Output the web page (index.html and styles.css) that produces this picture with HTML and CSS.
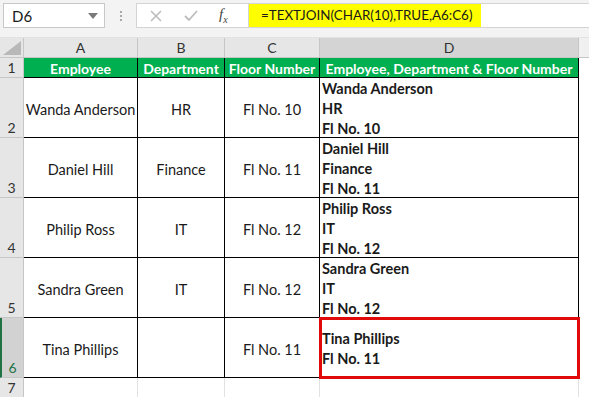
FILE: index.html
```html
<!DOCTYPE html>
<html>
<head>
  <title>TEXTJOIN example</title>
  <link rel="stylesheet" href="styles.css">
</head>
<body>

<!-- Name box and formula bar -->
<div class="toolbar">
  <div class="namebox">
    <span>D6</span>
    <svg class="caret" width="10" height="6" viewBox="0 0 10 6"><path d="M0 0 H10 L5 6 Z" fill="#7a7a7a"/></svg>
  </div>
  <div class="grip"><i></i><i></i><i></i></div>
  <div class="formula">
    <div class="fx-buttons">
      <svg width="14" height="14" viewBox="0 0 14 14"><path d="M2 2 L12 12 M12 2 L2 12" stroke="#bdbdbd" stroke-width="1.6"/></svg>
      <svg width="16" height="14" viewBox="0 0 16 14"><path d="M2 7 L6 11 L14 2" stroke="#bdbdbd" stroke-width="1.8" fill="none"/></svg>
      <span class="fx">f<sub>x</sub></span>
    </div>
    <div class="formula-text">=TEXTJOIN(CHAR(10),TRUE,A6:C6)</div>
  </div>
</div>

<!-- Sheet grid -->
<div class="sheet">
  <div class="corner"><svg width="18" height="14" viewBox="0 0 18 14"><path d="M18 0 V14 H0 Z" fill="#b8b8b8"/></svg></div>
  <div class="colhead">A</div>
  <div class="colhead">B</div>
  <div class="colhead">C</div>
  <div class="colhead active">D</div>
  <div class="colhead rest"></div>

  <div class="rowhead">1</div>
  <div class="cell title">Employee</div>
  <div class="cell title">Department</div>
  <div class="cell title">Floor Number</div>
  <div class="cell title">Employee, Department &amp; Floor Number</div>
  <div class="blank"></div>

  <div class="rowhead">2</div>
  <div class="cell">Wanda Anderson</div>
  <div class="cell">HR</div>
  <div class="cell">Fl No. 10</div>
  <div class="cell joined">Wanda Anderson<br>HR<br>Fl No. 10</div>
  <div class="blank"></div>

  <div class="rowhead">3</div>
  <div class="cell">Daniel Hill</div>
  <div class="cell">Finance</div>
  <div class="cell">Fl No. 11</div>
  <div class="cell joined">Daniel Hill<br>Finance<br>Fl No. 11</div>
  <div class="blank"></div>

  <div class="rowhead">4</div>
  <div class="cell">Philip Ross</div>
  <div class="cell">IT</div>
  <div class="cell">Fl No. 12</div>
  <div class="cell joined">Philip Ross<br>IT<br>Fl No. 12</div>
  <div class="blank"></div>

  <div class="rowhead">5</div>
  <div class="cell">Sandra Green</div>
  <div class="cell">IT</div>
  <div class="cell">Fl No. 12</div>
  <div class="cell joined">Sandra Green<br>IT<br>Fl No. 12</div>
  <div class="blank"></div>

  <div class="rowhead active">6</div>
  <div class="cell">Tina Phillips</div>
  <div class="cell"></div>
  <div class="cell">Fl No. 11</div>
  <div class="cell joined selected">Tina Phillips<br>Fl No. 11</div>
  <div class="blank"></div>

  <div class="rowhead last">7</div>
  <div class="empty"></div>
  <div class="empty"></div>
  <div class="empty"></div>
  <div class="empty"></div>
  <div class="blank"></div>
</div>

</body>
</html>
```

FILE: styles.css
```css
* {
  box-sizing: border-box;
}

body {
  margin: 0;
  font-family: Lato, "Open Sans", sans-serif;
  font-size: 14px;
  color: #1a1a1a;
  background-color: #ffffff;
  overflow: hidden;
}

/* top bar */
.toolbar {
  height: 38px;
  background-color: #f3f3f3;
  border-bottom: 1px solid #e2e2e2;
  display: flex;
  padding: 3px 0 0 3px;
}

.namebox {
  width: 102px;
  height: 25px;
  background-color: #ffffff;
  border: 1px solid #c8c8c8;
  display: flex;
  align-items: center;
  justify-content: space-between;
  padding: 0 6px 0 8px;
  font-size: 15px;
}

.grip {
  width: 31px;
  display: flex;
  flex-direction: column;
  align-items: center;
  justify-content: center;
  gap: 2px;
  height: 25px;
}

.grip i {
  width: 2px;
  height: 2px;
  background-color: #a8a8a8;
}

.formula {
  flex: 1;
  height: 25px;
  display: flex;
  background-color: #ffffff;
  border: 1px solid #d4d4d4;
  border-right: none;
}

.fx-buttons {
  width: 112px;
  display: flex;
  align-items: center;
  gap: 20px;
  padding-left: 12px;
  border-right: 1px solid #d4d4d4;
}

.fx {
  font-family: "Liberation Serif", serif;
  font-style: italic;
  font-size: 15px;
  color: #444;
}

.fx sub {
  font-size: 10px;
}

.formula-text {
  background-color: #ffff00;
  height: 23px;
  line-height: 23px;
  padding: 0 9px 0 12px;
  font-size: 13.4px;
}

/* sheet */
.sheet {
  display: grid;
  grid-template-columns: 24px 114px 87px 95px 259px 1fr;
  grid-template-rows: 20px 20px 60px 60px 60px 60px 60px 19px;
}

.corner {
  background-color: #e6e6e6;
  border-right: 1px solid #c6c6c6;
  border-bottom: 1px solid #c6c6c6;
  display: flex;
  align-items: flex-end;
  justify-content: flex-end;
  padding: 0 2px 2px 0;
}

.colhead {
  background-color: #e6e6e6;
  border-right: 1px solid #c6c6c6;
  border-bottom: 1px solid #c6c6c6;
  text-align: center;
  line-height: 19px;
  font-size: 14px;
  color: #333;
}

.colhead.active {
  background-color: #d4d4d4;
}

.colhead.rest {
  background-color: #f0f0f0;
  border-right: none;
}

.rowhead {
  background-color: #e6e6e6;
  border-right: 1px solid #c6c6c6;
  border-bottom: 1px solid #c6c6c6;
  display: flex;
  align-items: flex-end;
  justify-content: center;
  padding-bottom: 1px;
  font-size: 14px;
  line-height: 16px;
  color: #333;
}

.rowhead.active {
  background-color: #d2d2d2;
  border-left: 2px solid #217346;
  color: #217346;
}

.rowhead.last {
  border-bottom: none;
  align-items: center;
  padding-bottom: 0;
}

.cell {
  border-right: 1px solid #000;
  border-bottom: 1px solid #000;
  display: flex;
  align-items: center;
  justify-content: center;
  text-align: center;
  font-size: 14.5px;
  padding-top: 3px;
}

.cell.title {
  background-color: #00b050;
  color: #ffffff;
  font-weight: bold;
  font-size: 14px;
  white-space: nowrap;
  padding-top: 1px;
}

.cell.joined {
  justify-content: flex-start;
  text-align: left;
  font-weight: bold;
  line-height: 20px;
  padding-left: 2px;
}

.cell.selected {
  position: relative;
}

.cell.selected::after {
  content: "";
  position: absolute;
  left: -1px;
  top: -1px;
  right: -2px;
  bottom: -2px;
  border: 3px solid #e00a0a;
}

.empty {
  border-right: 1px solid #e2e2e2;
}

.blank {
  background-color: #ffffff;
}
```
